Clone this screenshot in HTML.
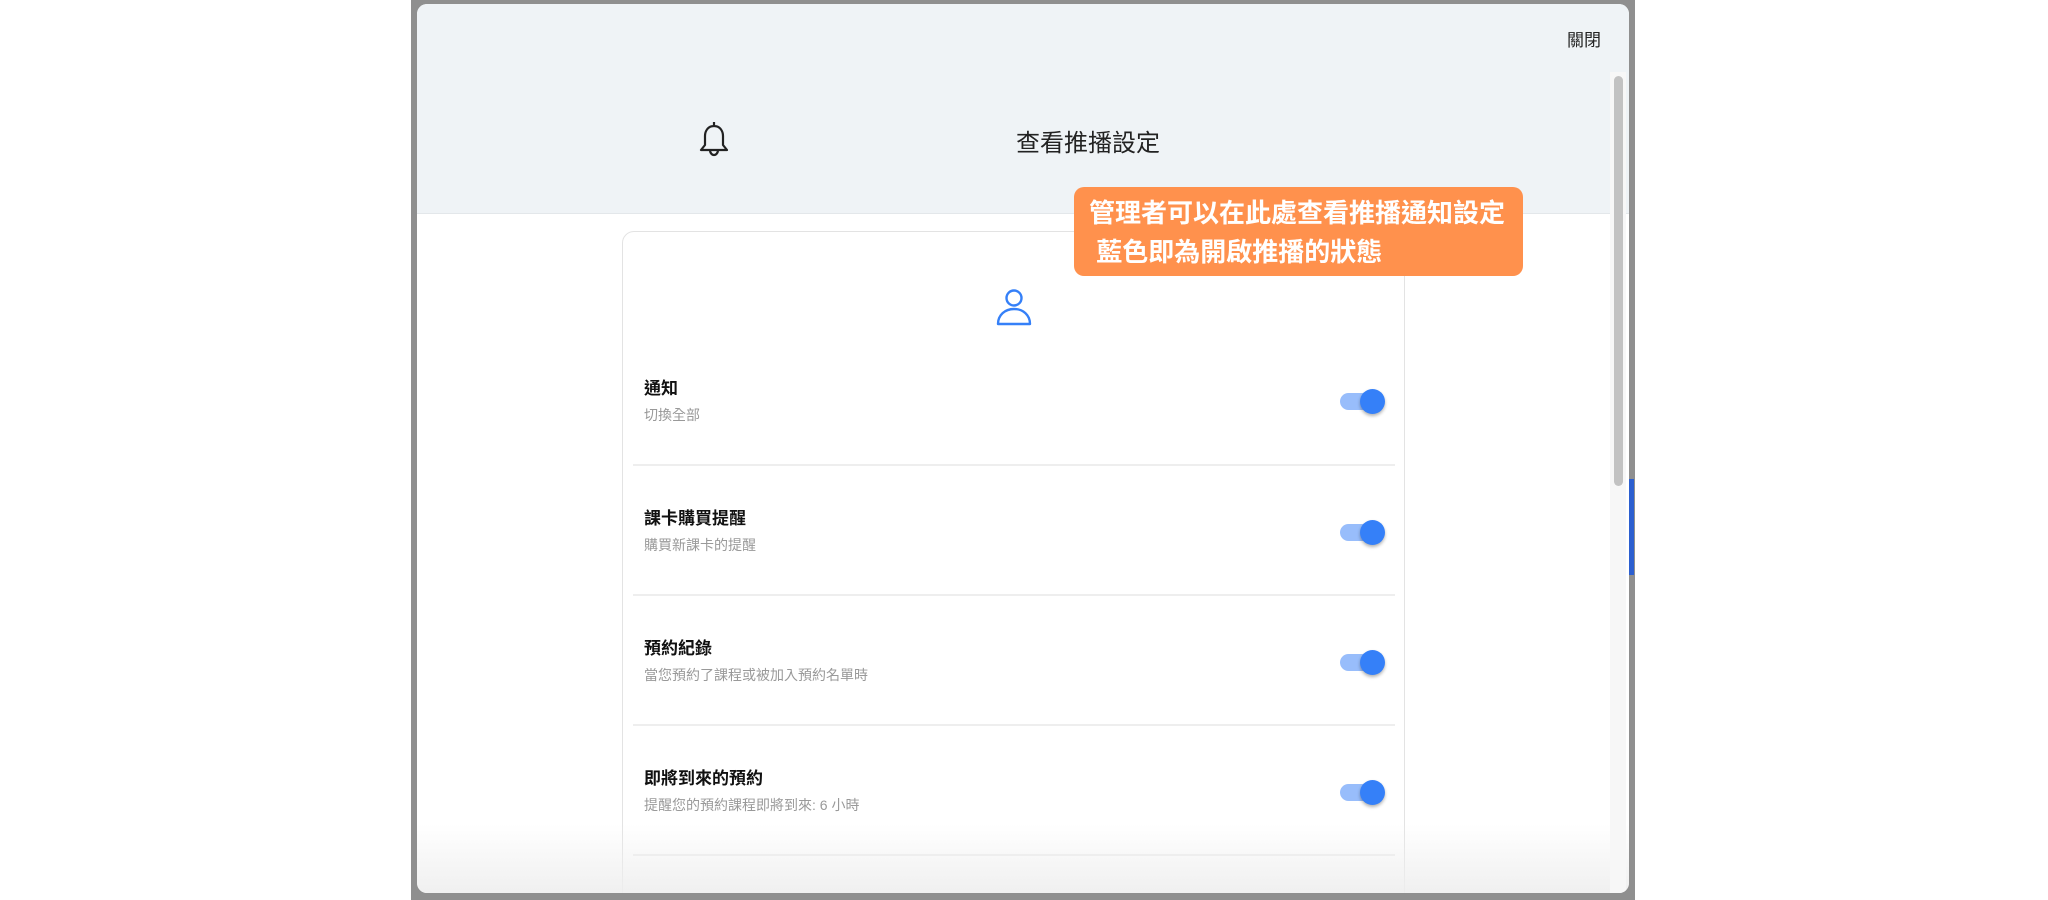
<!DOCTYPE html>
<html><head><meta charset="utf-8"><style>
*{margin:0;padding:0;box-sizing:border-box}
body{width:2048px;height:900px;background:#fff;position:relative;overflow:hidden;font-family:"Liberation Sans","Noto Sans CJK TC",sans-serif}
.backdrop{position:absolute;left:411px;top:0;width:1224px;height:900px;background:#8f8f8f}
.modal{position:absolute;left:417px;top:4px;width:1212px;height:889px;background:#fff;border-radius:10px;overflow:hidden}
.head{position:absolute;left:0;top:0;width:1212px;height:210px;background:#eff3f6;border-bottom:1px solid #e3e7ea}
.close{position:absolute;left:1150px;top:22px;font-size:17px;color:#222}
.title{position:absolute;left:561px;top:119px;width:220px;font-size:24px;color:#222;text-align:center;white-space:nowrap}
.bell{position:absolute;left:280px;top:116px}
.card{position:absolute;left:205px;top:227px;width:783px;height:700px;border:1px solid #e3e3e3;border-radius:12px;background:#fff}
.person{position:absolute;left:372px;top:55px}
.row{position:absolute;left:10px;width:762px;height:130px;border-bottom:2px solid #eeeeee}
.row .t{position:absolute;left:11px;font-size:17px;font-weight:bold;color:#111}
.row .s{position:absolute;left:11px;font-size:14px;color:#999}
.tog{position:absolute;left:707px;width:44px;height:18px}
.tog .tr{position:absolute;left:0;top:0;width:40px;height:17px;border-radius:9px;background:#98bdfb}
.tog .kn{position:absolute;left:20px;top:-4px;width:25px;height:25px;border-radius:50%;background:#3580f8;box-shadow:0 2px 3px rgba(0,0,0,.3)}
.scroll{position:absolute;left:1193px;top:68px;width:16px;height:821px;background:#f7f7f7}
.thumb{position:absolute;left:4px;top:4px;width:9px;height:410px;border-radius:5px;background:#c2c2c2}
.fade{position:absolute;left:0;top:820px;width:1212px;height:69px;background:linear-gradient(rgba(255,255,255,0),rgba(238,238,238,.9))}
.callout{position:absolute;left:1074px;top:187px;width:449px;height:89px;background:#ff914d;border-radius:10px;color:#fff;font-weight:bold;font-size:26px;line-height:39px;padding:7px 0 0 15px;white-space:nowrap}
.blue{position:absolute;left:1629px;top:479px;width:5px;height:96px;background:#2c5fd0}
</style></head><body>
<div class="backdrop"></div>
<div class="blue"></div>
<div class="modal">
 <div class="head">
  <div class="close">關閉</div>
  <svg class="bell" width="34" height="40" viewBox="0 0 34 40" fill="none" stroke="#222" stroke-width="2.2" stroke-linejoin="round"><path d="M17 2v4M17 6c-6 0-9 5-9 10v9l-4 5h26l-4-5v-9c0-5-3-10-9-10zM13 30c0 3 2 5 4 5s4-2 4-5"/></svg>
  <div class="title">查看推播設定</div>
 </div>
 <div class="card">
  <svg class="person" width="38" height="40" viewBox="0 0 38 40" fill="none" stroke="#3580f8" stroke-width="2.4"><circle cx="19" cy="11" r="7.5"/><path d="M3 37c0-9 7-15 16-15s16 6 16 15z" stroke-linejoin="round"/></svg>
  <div class="row" style="top:104px"><div class="t" style="top:38px">通知</div><div class="s" style="top:69px">切換全部</div><div class="tog" style="top:57px"><div class="tr"></div><div class="kn"></div></div></div>
  <div class="row" style="top:234px"><div class="t" style="top:38px">課卡購買提醒</div><div class="s" style="top:69px">購買新課卡的提醒</div><div class="tog" style="top:58px"><div class="tr"></div><div class="kn"></div></div></div>
  <div class="row" style="top:364px"><div class="t" style="top:38px">預約紀錄</div><div class="s" style="top:69px">當您預約了課程或被加入預約名單時</div><div class="tog" style="top:58px"><div class="tr"></div><div class="kn"></div></div></div>
  <div class="row" style="top:494px"><div class="t" style="top:38px">即將到來的預約</div><div class="s" style="top:69px">提醒您的預約課程即將到來: 6 小時</div><div class="tog" style="top:58px"><div class="tr"></div><div class="kn"></div></div></div>
 </div>
 <div class="fade"></div>
 <div class="scroll"><div class="thumb"></div></div>
</div>
<div class="callout">管理者可以在此處查看推播通知設定<br>&nbsp;藍色即為開啟推播的狀態</div>
</body></html>
